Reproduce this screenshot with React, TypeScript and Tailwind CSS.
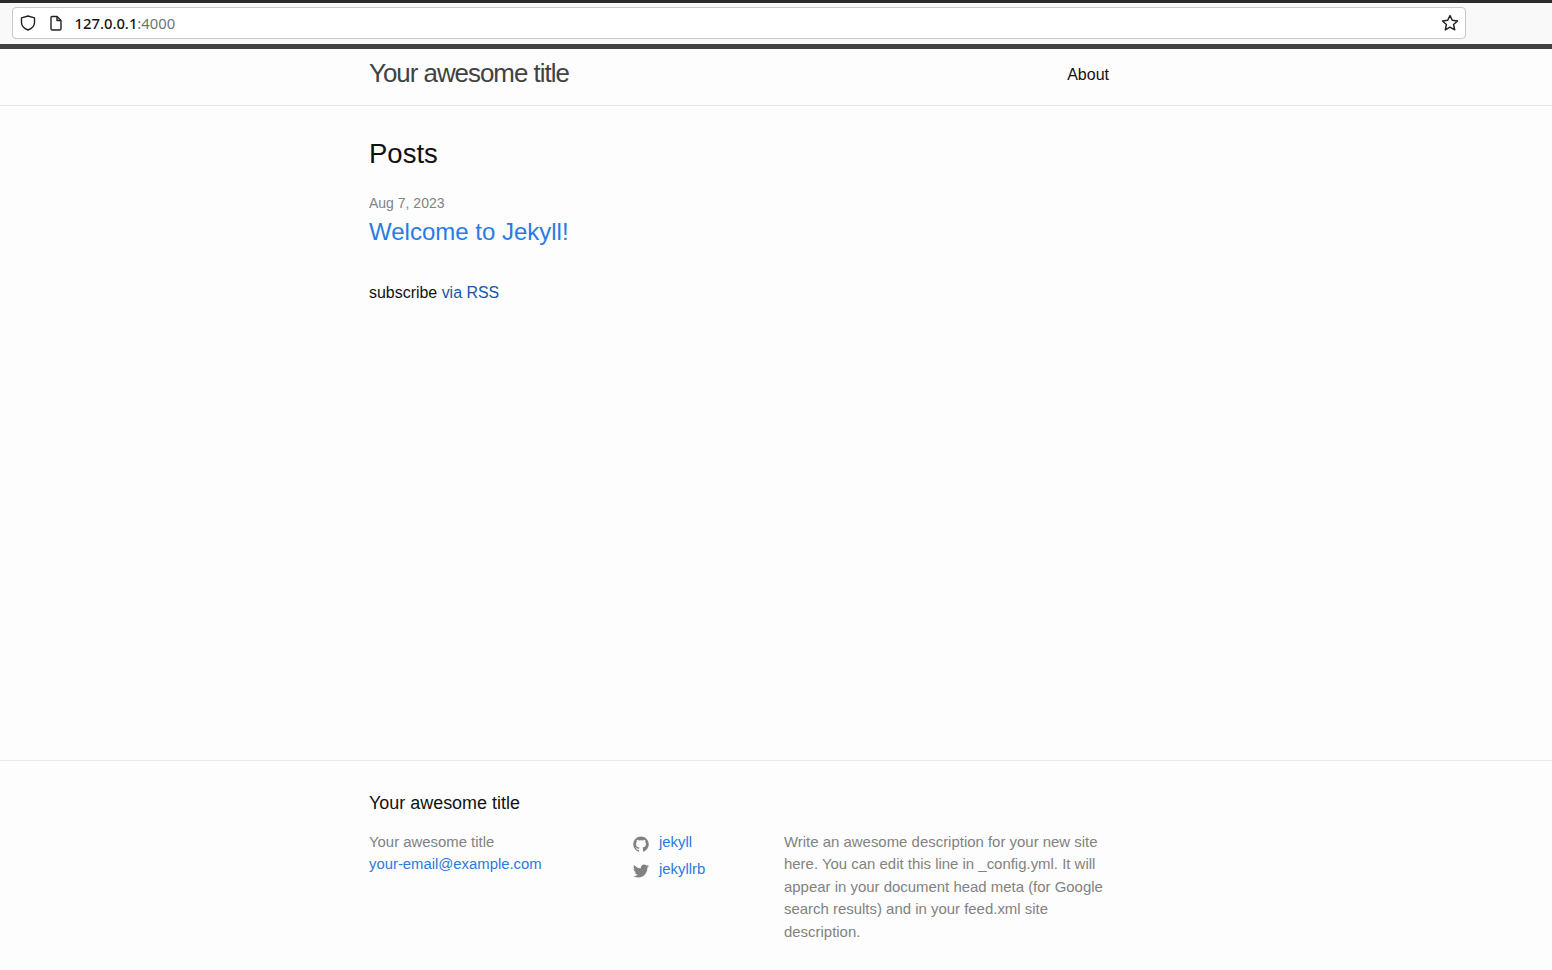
const GithubIcon = () => (
  <svg viewBox="0 0 16 16" className="w-4 h-4 fill-[#828282]">
    <path d="M7.999,0.431c-4.285,0-7.76,3.474-7.76,7.761 c0,3.428,2.223,6.337,5.307,7.363c0.388,0.071,0.53-0.168,0.53-0.374c0-0.184-0.007-0.672-0.01-1.32 c-2.159,0.469-2.614-1.04-2.614-1.04c-0.353-0.896-0.862-1.135-0.862-1.135c-0.705-0.481,0.053-0.472,0.053-0.472 c0.779,0.055,1.189,0.8,1.189,0.8c0.692,1.186,1.816,0.843,2.258,0.645c0.071-0.502,0.271-0.843,0.493-1.037 C4.86,11.425,3.049,10.76,3.049,7.786c0-0.847,0.302-1.54,0.799-2.082C3.768,5.507,3.501,4.718,3.924,3.65 c0,0,0.652-0.209,2.134,0.796C6.677,4.273,7.34,4.187,8,4.184c0.659,0.003,1.323,0.089,1.943,0.261 c1.482-1.004,2.132-0.796,2.132-0.796c0.423,1.068,0.157,1.857,0.077,2.054c0.497,0.542,0.798,1.235,0.798,2.082 c0,2.981-1.814,3.637-3.543,3.829c0.279,0.24,0.527,0.713,0.527,1.437c0,1.037-0.01,1.874-0.01,2.129 c0,0.208,0.14,0.449,0.534,0.373c3.081-1.028,5.302-3.935,5.302-7.362C15.76,3.906,12.285,0.431,7.999,0.431z" />
  </svg>
);

const TwitterIcon = () => (
  <svg viewBox="0 0 16 16" className="w-4 h-4 fill-[#828282]">
    <path d="M15.969,3.058c-0.586,0.26-1.217,0.436-1.878,0.515c0.675-0.405,1.194-1.045,1.438-1.809c-0.632,0.375-1.332,0.647-2.076,0.793c-0.596-0.636-1.446-1.033-2.387-1.033c-1.806,0-3.27,1.464-3.27,3.27 c0,0.256,0.029,0.506,0.085,0.745C5.163,5.404,2.753,4.102,1.14,2.124C0.859,2.607,0.698,3.168,0.698,3.767 c0,1.134,0.577,2.135,1.455,2.722C1.616,6.472,1.112,6.325,0.671,6.08c0,0.014,0,0.027,0,0.041c0,1.584,1.127,2.906,2.623,3.206 C3.02,9.402,2.731,9.442,2.433,9.442c-0.211,0-0.416-0.021-0.615-0.059c0.416,1.299,1.624,2.245,3.055,2.271 c-1.119,0.877-2.529,1.4-4.061,1.4c-0.264,0-0.524-0.015-0.78-0.046c1.447,0.928,3.166,1.469,5.013,1.469 c6.015,0,9.304-4.983,9.304-9.304c0-0.142-0.003-0.283-0.009-0.423C14.976,4.29,15.531,3.714,15.969,3.058z" />
  </svg>
);

const BrowserBar = () => {
  return (
    <div className="h-[44px] shrink-0 border-t-[3px] border-[#2b2b2b] bg-[#f9f9fa] pl-3 pr-[86px] pt-1">
      <div className="flex h-[32px] items-center rounded border border-[#c8c8c8] bg-white pl-[7px] pr-[6px]">
        <svg viewBox="0 0 16 16" className="h-4 w-4 fill-none stroke-[#222] stroke-[1.4]">
          <path d="M8 1 14.500 2.800v4.700c0 3.600-2.800 6.100-6.500 7.500-3.700-1.400-6.500-3.900-6.500-7.500V2.800z" strokeLinejoin="round" />
        </svg>
        <svg viewBox="0 0 16 16" className="ml-3 h-4 w-4 fill-none stroke-[#222] stroke-[1.4]">
          <path d="M3 2.500a1 1 0 0 1 1-1h5l4 4v8a1.500 1.500 0 0 1-1.500 1.500h-7A1.500 1.500 0 0 1 3 13.500z" strokeLinejoin="round" />
          <path d="M9 1.500v4h4" strokeLinejoin="round" />
        </svg>
        <span className="ml-[10.500px] mt-[1px] font-['Noto_Sans',sans-serif] text-[14.800px] font-medium text-[#15141a]">
          127.0.0.1<span className="font-normal text-[#737373]">:4000</span>
        </span>
        <svg viewBox="0 0 16 16" className="ml-auto h-[18px] w-[18px] fill-none stroke-[#222] stroke-[1.3]">
          <path d="M8 1.300 10 5.600 14.700 6.200 11.200 9.400 12.200 14.100 8 11.700 3.800 14.100 4.800 9.400 1.300 6.200 6 5.600z" strokeLinejoin="round" />
        </svg>
      </div>
    </div>
  );
};

const App = () => {
  return (
    <div className="flex h-[970px] flex-col overflow-hidden bg-[#fdfdfd] font-['Liberation_Sans',Arial,sans-serif] text-[#111111]">
      <BrowserBar />
      <header className="h-[62px] shrink-0 border-t-[5px] border-b border-t-[#424242] border-b-[#e8e8e8] pl-[369px]">
        <div className="flex w-[740px] items-center justify-between">
          <a className="text-[25.900px] leading-[48px] tracking-[-1px] text-[#424242]">Your awesome title</a>
          <a className="mt-[4px] text-base text-[#111111]">About</a>
        </div>
      </header>

      <main className="flex-1 pl-[369px] pt-[30px]">
        <h1 className="text-[27.500px] leading-[36px] text-[#111111]">Posts</h1>
        <div className="mt-[21px] text-sm leading-[21px] text-[#828282]">Aug 7, 2023</div>
        <h2 className="text-2xl leading-[36px]">
          <a className="text-[#2a7ae2]">Welcome to Jekyll!</a>
        </h2>
        <p className="mt-[31px] text-[15.950px] leading-[24px]">
          subscribe <a className="text-[#1756a9]">via RSS</a>
        </p>
      </main>

      <footer className="h-[210px] shrink-0 border-t border-[#e8e8e8] pl-[369px] pt-[30px]">
        <h2 className="text-[17.950px] leading-[24px] text-[#111111]">Your awesome title</h2>
        <div className="mt-[15.600px] flex text-[14.900px] leading-[22.500px] text-[#828282]">
          <div className="w-[264px] shrink-0">
            <div>Your awesome title</div>
            <a className="text-[14.850px] text-[#2a7ae2]">your-email@example.com</a>
          </div>
          <div className="w-[151px] shrink-0">
            <a className="flex h-[27px] items-start text-[#2a7ae2]">
              <span className="mt-[5px] mr-[10px]"><GithubIcon /></span>jekyll
            </a>
            <a className="flex h-[27px] items-start text-[#2a7ae2]">
              <span className="mt-[5px] mr-[10px]"><TwitterIcon /></span>jekyllrb
            </a>
          </div>
          <p className="w-[325px] text-[14.950px]">
            Write an awesome description for your new site here. You can edit this line in _config.yml. It will appear in your document head meta (for Google search results) and in your feed.xml site description.
          </p>
        </div>
      </footer>
    </div>
  );
};

export default App;
